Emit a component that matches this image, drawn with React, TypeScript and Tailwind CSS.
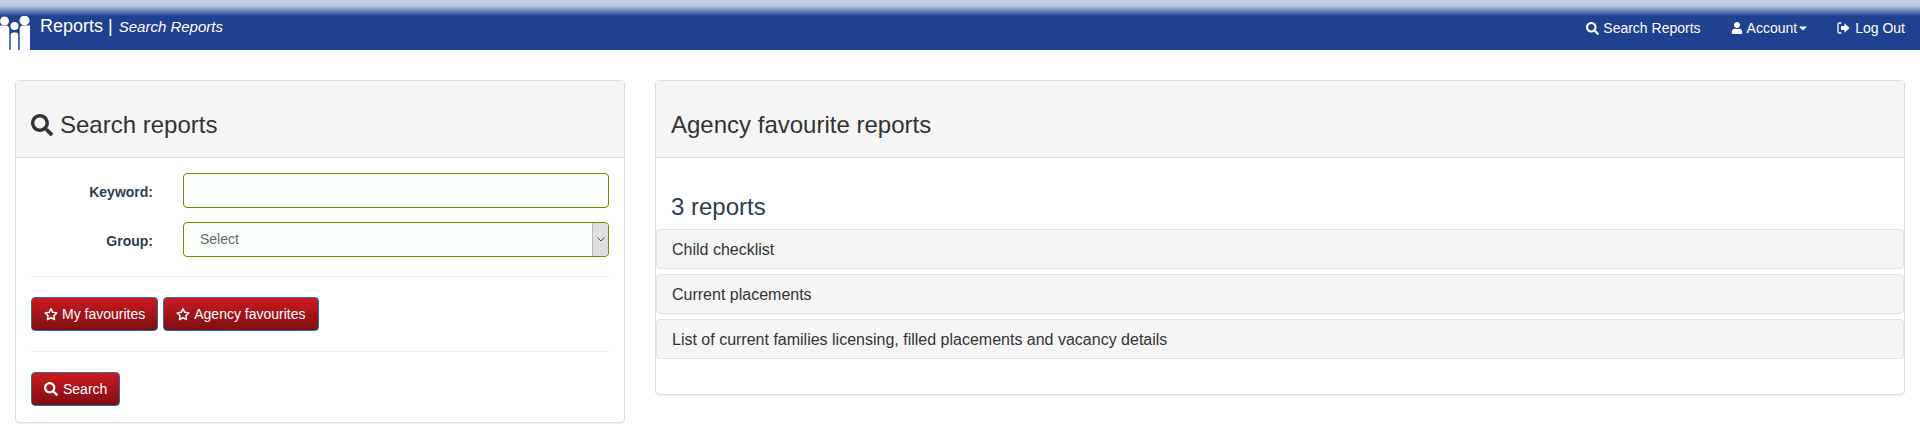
import { FaSearch, FaUser, FaCaretDown } from "react-icons/fa";

const reports = [
  "Child checklist",
  "Current placements",
  "List of current families licensing, filled placements and vacancy details",
];

function Logo() {
  return (
    <svg width="30" height="34" viewBox="0 0 30 34" className="shrink-0" fill="#fff">
      <circle cx="4.500" cy="5" r="4.500" />
      <path d="M0 9.500h6c2 0 3.300 1.500 3.300 3.500v21H0z" />
      <circle cx="14.500" cy="10" r="4" />
      <path d="M10.700 19c0-1.500 1-2.500 2.300-2.500h3c1.300 0 2.200 1 2.200 2.500v15h-7.500z" />
      <circle cx="24.500" cy="4.500" r="5" />
      <path d="M30 9.500h-7c-2 0-3.300 1.500-3.300 3.500v21H30z" />
    </svg>
  );
}

function LogOutIcon() {
  return (
    <svg width="13" height="12" viewBox="0 0 13 12" fill="none">
      <path d="M4.500 1H2.200C1.500 1 1 1.500 1 2.200v7.600C1 10.500 1.500 11 2.200 11h2.300" stroke="#fff" strokeWidth="1.300" />
      <path d="M4 4h3.500V1.300L12.500 6l-5 4.700V8H4z" fill="#fff" />
    </svg>
  );
}

function StarOutline() {
  return (
    <svg width="14" height="14" viewBox="0 0 15 14" fill="none">
      <path
        d="M7.500 1.300l1.900 3.900 4.300.6-3.100 3 .7 4.200-3.800-2-3.800 2 .7-4.200-3.100-3 4.300-.6z"
        stroke="#fff"
        strokeWidth="1.600"
        strokeLinejoin="round"
      />
    </svg>
  );
}

function RedButton({ icon, label }: { icon: React.ReactNode; label: string }) {
  return (
    <button className="h-[34px] px-3 flex items-center gap-[4px] rounded border border-[#2e6da4] bg-gradient-to-b from-[#cc1a22] to-[#7f0e12] text-[14px] text-white">
      {icon}
      {label}
    </button>
  );
}

export default function App() {
  return (
    <div className="w-[1920px] h-[432px] bg-white font-['Liberation_Sans',Arial,sans-serif] text-[14px] text-[#333] overflow-hidden">
      <nav className="h-[50px] bg-[#204090] bg-[linear-gradient(to_bottom,#c5cee3_0px,#b9c3dd_6px,#204090_16px)] flex items-end justify-between">
        <div className="flex items-start h-[34px]">
          <Logo />
          <div className="ml-[10px] text-white leading-[20px] flex items-baseline">
            <span className="text-[18px]">Reports |</span>
            <em className="ml-[6px] text-[15px]">Search Reports</em>
          </div>
        </div>
        <div className="flex items-center h-[34px] pb-[10px] text-[14px] text-white pr-[15px]">
          <a className="flex items-center gap-[4px]">
            <FaSearch className="text-[13px]" />
            Search Reports
          </a>
          <a className="ml-[30px] flex items-center gap-[4px]">
            <FaUser className="text-[12px]" />
            <span className="flex items-center">
              Account
              <FaCaretDown className="text-[12px]" />
            </span>
          </a>
          <a className="ml-[28px] flex items-center gap-[5px]">
            <LogOutIcon />
            Log Out
          </a>
        </div>
      </nav>

      <div className="flex items-start gap-[30px] px-[15px] pt-[30px]">
        <section className="w-[610px] shrink-0 rounded border border-[#ddd] shadow-[0_1px_1px_rgba(0,0,0,0.05)]">
          <div className="h-[77px] bg-[#f5f5f5] border-b border-[#ddd] px-[15px] pt-[31px]">
            <h3 className="text-[24px] leading-[26px] flex items-center gap-[7px]">
              <FaSearch className="text-[22px]" />
              Search reports
            </h3>
          </div>
          <div className="px-[15px] pt-[15px] pb-[16px]">
            <div className="flex items-center">
              <label className="w-[122px] text-right font-bold text-[#2c3e50] pt-[4px]">Keyword:</label>
              <input className="ml-[30px] flex-1 h-[35px] rounded border border-[#808000] bg-[#fbfffb]" />
            </div>
            <div className="flex items-center mt-[14px]">
              <label className="w-[122px] text-right font-bold text-[#2c3e50] pt-[4px]">Group:</label>
              <div className="ml-[30px] flex-1 h-[35px] rounded border border-[#808000] bg-[#fbfffb] flex items-center justify-between pl-[16px] text-[#666]">
                Select
                <span className="w-[16px] h-full rounded-r bg-[#dfdfdf] border-l border-[#bbb] flex items-center justify-center">
                  <svg width="8" height="5" viewBox="0 0 8 5" fill="none">
                    <path d="M0.500 0.500L4 4L7.500 0.500" stroke="#555" />
                  </svg>
                </span>
              </div>
            </div>
            <hr className="mt-[19px] border-[#eee]" />
            <div className="mt-[20px] flex gap-[5px]">
              <RedButton icon={<StarOutline />} label="My favourites" />
              <RedButton icon={<StarOutline />} label="Agency favourites" />
            </div>
            <hr className="mt-[20px] border-[#eee]" />
            <div className="mt-[20px] flex">
              <RedButton icon={<FaSearch className="text-[14px] mr-[1px]" />} label="Search" />
            </div>
          </div>
        </section>

        <section className="flex-1 rounded border border-[#ddd] shadow-[0_1px_1px_rgba(0,0,0,0.05)] h-[315px]">
          <div className="h-[77px] bg-[#f5f5f5] border-b border-[#ddd] px-[15px] pt-[31px]">
            <h3 className="text-[24px] leading-[26px]">Agency favourite reports</h3>
          </div>
          <h3 className="mt-[36px] px-[15px] text-[24px] leading-[26px] text-[#2c3e50]">3 reports</h3>
          <div className="mt-[9px] flex flex-col gap-[5px]">
            {reports.map((report) => (
              <div
                key={report}
                className="h-[40px] rounded bg-[#f5f5f5] border border-[#e3e3e3] flex items-center px-[15px] pt-[1px] text-[16px] text-[#333]"
              >
                {report}
              </div>
            ))}
          </div>
        </section>
      </div>
    </div>
  );
}
